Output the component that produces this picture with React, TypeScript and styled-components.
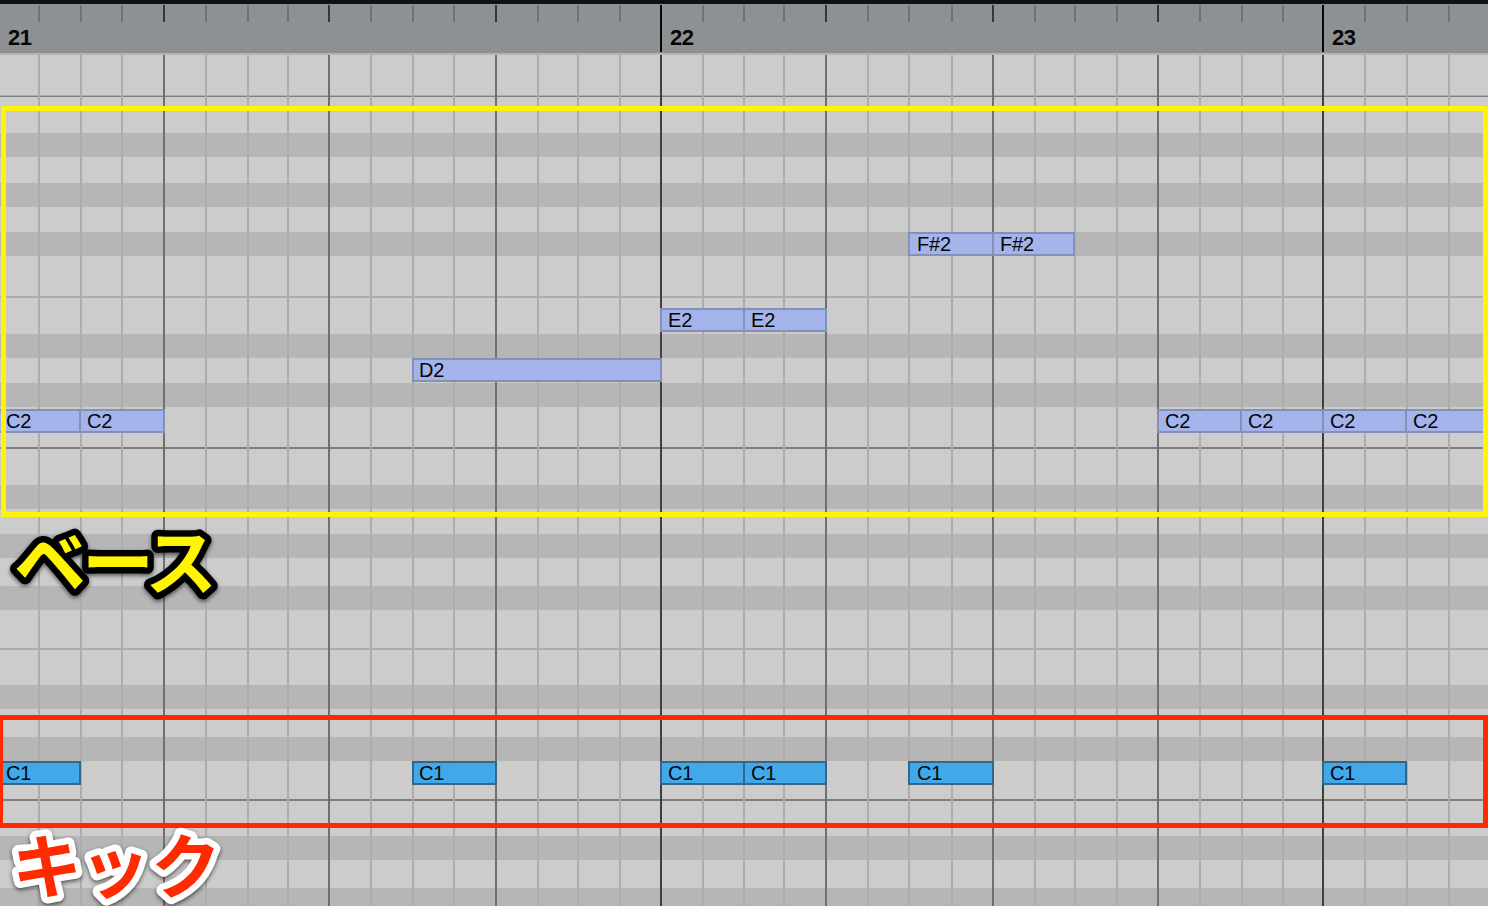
import React from "react";
import styled, { createGlobalStyle } from "styled-components";

const GlobalStyle = createGlobalStyle`
  body {
    margin: 0;
    overflow: hidden;
    background: #cccccc;
    font-family: "Liberation Sans", Arial, sans-serif;
  }
`;

type Weight = "minor" | "beat" | "bar";

const lineColor: Record<Weight, string> = {
  minor: "#adadad",
  beat: "#707070",
  bar: "#404040",
};
const tickColor: Record<Weight, string> = {
  minor: "#707374",
  beat: "#353637",
  bar: "#050505",
};

const Screen = styled.div`
  position: relative;
  display: flex;
  flex-direction: column;
  width: 1488px;
  height: 906px;
  overflow: hidden;
`;

const Ruler = styled.header`
  position: relative;
  box-sizing: border-box;
  flex: none;
  height: 55px;
  border-top: 4px solid #111111;
  border-bottom: 2px solid #b4b4b4;
  background: #8d9193;
`;

const Columns = styled.div`
  position: absolute;
  inset: 0;
  display: flex;
`;

const Column = styled.div<{ $width: number }>`
  flex: none;
  width: ${(p) => p.$width}px;
`;

const Tick = styled.div<{ $weight: Weight }>`
  width: 2px;
  height: ${(p) => (p.$weight === "bar" ? 47 : 17)}px;
  margin-top: 1px;
  background: ${(p) => tickColor[p.$weight]};
`;

const GridLine = styled.div<{ $weight: Weight }>`
  width: 2px;
  height: 100%;
  background: ${(p) => lineColor[p.$weight]};
`;

const BarNumber = styled.span`
  display: block;
  margin: -26px 0 0 10px;
  font-size: 22px;
  line-height: 24px;
  font-weight: bold;
  letter-spacing: -0.5px;
  color: #060606;
`;

const FirstBarNumber = styled(BarNumber)`
  width: 30px;
  margin: 22px 0 0 8px;
`;

const Roll = styled.main`
  position: relative;
  flex: 1;
  display: flex;
  flex-direction: column;
`;

const Key = styled.div<{ $height: number; $tone: "white" | "black" | "rule" | "faint" }>`
  flex: none;
  height: ${(p) => p.$height}px;
  background: ${(p) =>
    ({ white: "#cccccc", black: "#b6b6b6", rule: "#808080", faint: "#adadad" })[p.$tone]};
`;

const Note = styled.div<{ $x: number; $y: number; $w: number; $kick?: boolean; $inset?: number }>`
  position: absolute;
  left: ${(p) => p.$x}px;
  top: ${(p) => p.$y}px;
  width: ${(p) => p.$w}px;
  height: 24px;
  box-sizing: border-box;
  padding-left: ${(p) => p.$inset ?? 5}px;
  border: 2px solid ${(p) => (p.$kick ? "#356784" : "#8590b8")};
  background: ${(p) => (p.$kick ? "#41a8ea" : "#a4b4eb")};
  color: #050505;
  font-size: 20px;
  line-height: 21px;
  letter-spacing: -0.2px;
  white-space: nowrap;
`;

const Frame = styled.div<{ $kind: "bass" | "kick" }>`
  position: absolute;
  box-sizing: border-box;
  left: ${(p) => (p.$kind === "bass" ? 1 : -2)}px;
  top: ${(p) => (p.$kind === "bass" ? 106 : 715)}px;
  width: ${(p) => (p.$kind === "bass" ? 1487 : 1490)}px;
  height: ${(p) => (p.$kind === "bass" ? 411 : 113)}px;
  border: 5px solid ${(p) => (p.$kind === "bass" ? "#fff500" : "#ff2a00")};
  border-radius: ${(p) => (p.$kind === "bass" ? 2 : 0)}px;
`;

const Captions = styled.svg`
  position: absolute;
  left: 0;
  top: 0;
  overflow: visible;
  pointer-events: none;
`;

const Caption = styled.text<{ $kind: "bass" | "kick" }>`
  font-family: "Noto Sans CJK JP", sans-serif;
  font-size: ${(p) => (p.$kind === "bass" ? 72 : 70)}px;
  font-weight: 700;
  fill: ${(p) => (p.$kind === "bass" ? "#fff500" : "#ff2a00")};
  stroke: ${(p) => (p.$kind === "bass" ? "#000000" : "#ffffff")};
  stroke-width: 13px;
  stroke-linejoin: round;
  paint-order: stroke fill;
  filter: drop-shadow(0 2px 2px rgba(0, 0, 0, 0.6));
`;

const lines = [
  38, 80, 121, 163, 205, 247, 287, 328, 370, 412, 453, 495, 537, 577, 619, 660, 702, 743, 783, 825,
  867, 908, 951, 992, 1034, 1074, 1116, 1157, 1199, 1241, 1282, 1322, 1364, 1406, 1448,
];

const weightOf = (i: number): Weight =>
  (i + 1) % 16 === 0 ? "bar" : (i + 1) % 4 === 0 ? "beat" : "minor";

const barNumbers: Record<number, string> = { 660: "22", 1322: "23" };

const keys: [number, "white" | "black" | "rule" | "faint"][] = [
  [40, "white"], [1, "faint"], [1, "rule"], [36, "white"],
  [24, "black"], [26, "white"], [24, "black"], [25, "white"], [24, "black"],
  [40, "white"], [2, "faint"], [36, "white"],
  [24, "black"], [25, "white"], [24, "black"],
  [40, "white"], [2, "rule"], [36, "white"],
  [24, "black"], [25, "white"], [24, "black"], [28, "white"], [24, "black"],
  [38, "white"], [2, "faint"], [35, "white"],
  [24, "black"], [28, "white"], [24, "black"],
  [38, "white"], [2, "rule"], [35, "white"],
  [24, "black"], [28, "white"], [18, "black"],
];

const bassNotes = [
  { x: -2, y: 409, w: 83, label: "C2", inset: 6 },
  { x: 79, y: 409, w: 86, label: "C2", inset: 6 },
  { x: 412, y: 358, w: 250, label: "D2" },
  { x: 660, y: 308, w: 85, label: "E2", inset: 6 },
  { x: 743, y: 308, w: 84, label: "E2", inset: 6 },
  { x: 908, y: 232, w: 86, label: "F#2", inset: 7 },
  { x: 992, y: 232, w: 83, label: "F#2", inset: 6 },
  { x: 1157, y: 409, w: 85, label: "C2", inset: 6 },
  { x: 1240, y: 409, w: 84, label: "C2", inset: 6 },
  { x: 1322, y: 409, w: 85, label: "C2", inset: 6 },
  { x: 1405, y: 409, w: 84, label: "C2", inset: 6 },
];

const kickNotes = [
  { x: -2, w: 83, inset: 6 },
  { x: 412, w: 85 },
  { x: 660, w: 85, inset: 6 },
  { x: 743, w: 84, inset: 6 },
  { x: 908, w: 86, inset: 7 },
  { x: 1322, w: 85, inset: 6 },
];

const columnWidth = (i: number) => (lines[i + 1] ?? 1488) - lines[i];

export default function App() {
  return (
    <Screen>
      <GlobalStyle />
      <Ruler>
        <Columns>
          <Column $width={lines[0]}>
            <FirstBarNumber>21</FirstBarNumber>
          </Column>
          {lines.map((x, i) => (
            <Column key={x} $width={columnWidth(i)}>
              <Tick $weight={weightOf(i)} />
              {barNumbers[x] && <BarNumber>{barNumbers[x]}</BarNumber>}
            </Column>
          ))}
        </Columns>
      </Ruler>
      <Roll>
        {keys.map(([height, tone], i) => (
          <Key key={i} $height={height} $tone={tone} />
        ))}
        <Columns>
          <Column $width={lines[0]} />
          {lines.map((x, i) => (
            <Column key={x} $width={columnWidth(i)}>
              <GridLine $weight={weightOf(i)} />
            </Column>
          ))}
        </Columns>
      </Roll>
      {bassNotes.map((n) => (
        <Note key={n.x} $x={n.x} $y={n.y} $w={n.w} $inset={n.inset}>
          {n.label}
        </Note>
      ))}
      {kickNotes.map((n) => (
        <Note key={n.x} $x={n.x} $y={761} $w={n.w} $inset={n.inset} $kick>
          C1
        </Note>
      ))}
      <Frame $kind="bass" />
      <Frame $kind="kick" />
      <Captions width="1488" height="906">
        <Caption $kind="bass" x="14 82 145" y="589">
          ベース
        </Caption>
        <Caption $kind="kick" x="12 80 151" y="893">
          キック
        </Caption>
      </Captions>
    </Screen>
  );
}
